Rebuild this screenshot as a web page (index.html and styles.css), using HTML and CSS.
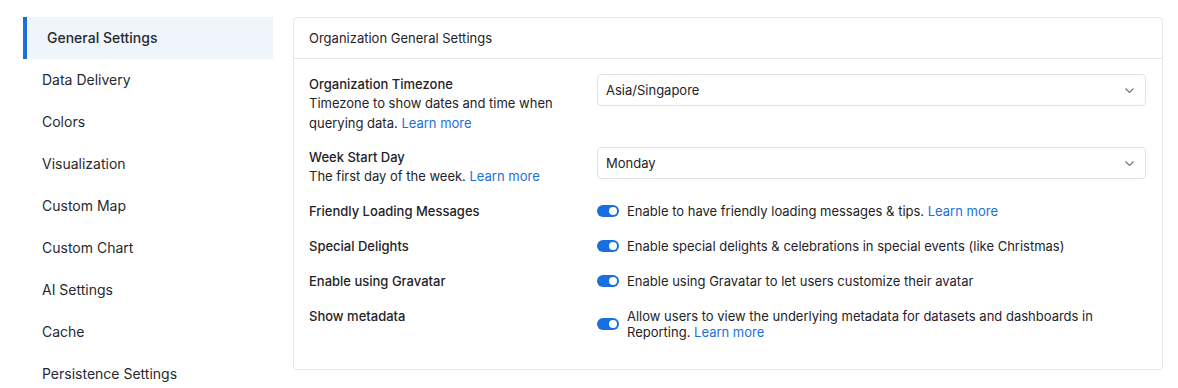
FILE: index.html
```html
<!DOCTYPE html>
<html>
<head>
  <title>Settings</title>
  <link rel="stylesheet" href="styles.css">
</head>
<body>
  <div class="page">
    <!-- Sidebar -->
    <nav class="sidebar">
      <a href="#" class="nav-item active">General Settings</a>
      <a href="#" class="nav-item">Data Delivery</a>
      <a href="#" class="nav-item">Colors</a>
      <a href="#" class="nav-item">Visualization</a>
      <a href="#" class="nav-item">Custom Map</a>
      <a href="#" class="nav-item">Custom Chart</a>
      <a href="#" class="nav-item">AI Settings</a>
      <a href="#" class="nav-item">Cache</a>
      <a href="#" class="nav-item">Persistence Settings</a>
    </nav>

    <!-- Settings card -->
    <div class="card">
      <div class="card-header">Organization General Settings</div>
      <div class="card-body">

        <div class="row">
          <div class="label-col">
            <div class="label">Organization Timezone</div>
            <div class="desc">Timezone to show dates and time when querying data. <a href="#" class="link">Learn more</a></div>
          </div>
          <div class="value-col">
            <div class="select">
              <span>Asia/Singapore</span>
              <svg class="chevron" width="9" height="5" viewBox="0 0 9 5"><path d="M0.5 0.5l4 4 4-4" fill="none" stroke="#6b7280" stroke-width="1.1"/></svg>
            </div>
          </div>
        </div>

        <div class="row">
          <div class="label-col">
            <div class="label">Week Start Day</div>
            <div class="desc">The first day of the week. <a href="#" class="link">Learn more</a></div>
          </div>
          <div class="value-col">
            <div class="select">
              <span>Monday</span>
              <svg class="chevron" width="9" height="5" viewBox="0 0 9 5"><path d="M0.5 0.5l4 4 4-4" fill="none" stroke="#6b7280" stroke-width="1.1"/></svg>
            </div>
          </div>
        </div>

        <div class="row">
          <div class="label-col"><div class="label toggle-label">Friendly Loading Messages</div></div>
          <div class="value-col toggle-line">
            <span class="toggle"></span>
            <span class="toggle-text">Enable to have friendly loading messages &amp; tips. <a href="#" class="link">Learn more</a></span>
          </div>
        </div>

        <div class="row">
          <div class="label-col"><div class="label toggle-label">Special Delights</div></div>
          <div class="value-col toggle-line">
            <span class="toggle"></span>
            <span class="toggle-text">Enable special delights &amp; celebrations in special events (like Christmas)</span>
          </div>
        </div>

        <div class="row">
          <div class="label-col"><div class="label toggle-label">Enable using Gravatar</div></div>
          <div class="value-col toggle-line">
            <span class="toggle"></span>
            <span class="toggle-text">Enable using Gravatar to let users customize their avatar</span>
          </div>
        </div>

        <div class="row">
          <div class="label-col"><div class="label toggle-label">Show metadata</div></div>
          <div class="value-col toggle-line">
            <span class="toggle"></span>
            <span class="toggle-text">Allow users to view the underlying metadata for datasets and dashboards in Reporting. <a href="#" class="link">Learn more</a></span>
          </div>
        </div>

      </div>
    </div>
  </div>
</body>
</html>
```

FILE: styles.css
```css
body {
  font-family: Inter, "Noto Sans", sans-serif;
  margin: 0;
  padding: 0;
  background-color: #fff;
  color: #1f2328;
}

a {
  text-decoration: none;
}

.page {
  display: flex;
  align-items: flex-start;
  gap: 20px;
  padding: 17px 0 0 23px;
}

.sidebar {
  width: 250px;
  flex-shrink: 0;
  display: flex;
  flex-direction: column;
}

.nav-item {
  display: block;
  height: 42px;
  line-height: 42px;
  padding-left: 19px;
  font-size: 14px;
  color: #262a30;
}

.nav-item.active {
  background-color: #f0f5fc;
  border-left: 4px solid #1a6fe0;
  padding-left: 20px;
  font-weight: 500;
}

.card {
  width: 868px;
  border: 1px solid #e3e6ea;
  border-radius: 4px;
}

.card-header {
  height: 40px;
  line-height: 40px;
  padding: 0 15px;
  font-size: 13px;
  font-weight: 400;
  border-bottom: 1px solid #e3e6ea;
}

.card-body {
  padding: 15px 16px 26px 15px;
  display: flex;
  flex-direction: column;
  gap: 14px;
}

.row {
  display: flex;
}

.label-col {
  width: 288px;
  flex-shrink: 0;
  padding-right: 16px;
  box-sizing: border-box;
}

.label {
  font-size: 13px;
  font-weight: 500;
  line-height: 20px;
}

.toggle-label {
  line-height: 21px;
}

.desc {
  font-size: 13px;
  line-height: 19.5px;
}

.link {
  color: #1a6fe0;
}

.value-col {
  flex: 1;
}

.select {
  height: 32px;
  box-sizing: border-box;
  border: 1px solid #dfe3e8;
  border-radius: 4px;
  display: flex;
  align-items: center;
  justify-content: space-between;
  padding: 0 11px 0 8px;
  font-size: 13px;
}

.toggle-line {
  display: flex;
  align-items: center;
  gap: 8px;
  padding: 2px 0 3px;
}

.toggle {
  position: relative;
  width: 22px;
  height: 12px;
  border-radius: 6px;
  background-color: #1a6fe0;
  flex-shrink: 0;
}

.toggle::after {
  content: "";
  position: absolute;
  right: 2px;
  top: 2px;
  width: 8px;
  height: 8px;
  border-radius: 50%;
  background-color: #fff;
}

.toggle-text {
  font-size: 13px;
  line-height: 16px;
  padding-right: 40px;
}
```
